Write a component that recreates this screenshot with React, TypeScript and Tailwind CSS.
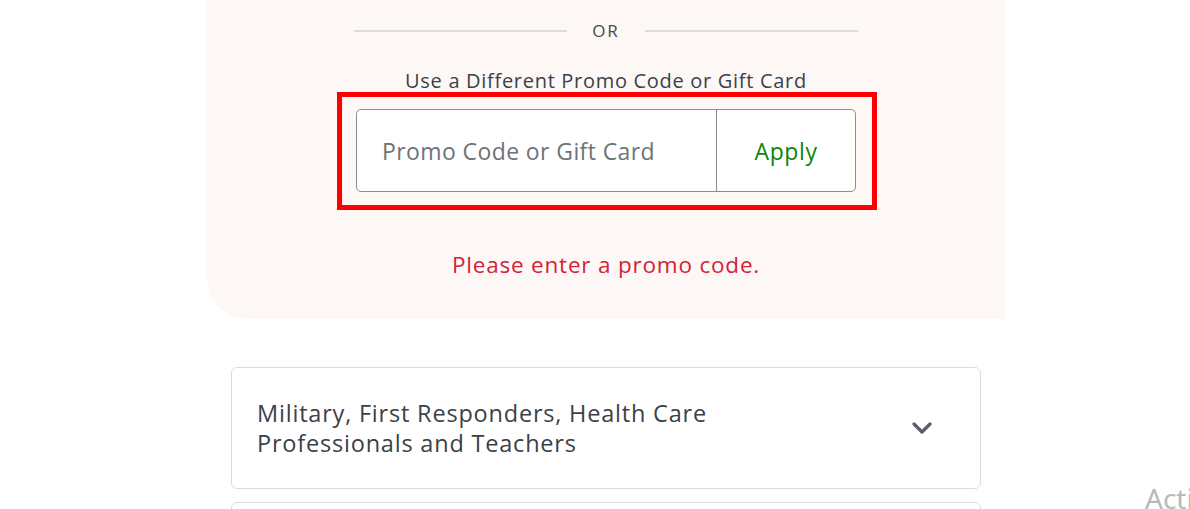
import { ChevronDown } from "lucide-react";

function PromoBox() {
    return (
        <div className="border-[5px] border-[#ff0000] pt-[12px] pl-[14px] pr-[16px] pb-[13px]">
            <div className="flex w-[500px] h-[83px] border border-[#8c8c8c] rounded-[5px] bg-white">
                <input
                    className="flex-1 min-w-0 px-[25px] pt-[2px] text-[23px] text-[#3b4148] placeholder:text-[#6e7379] outline-none bg-transparent tracking-[0.4px]"
                    placeholder="Promo Code or Gift Card"
                />
                <button className="w-[139px] pt-[2px] border-l border-[#8c8c8c] text-[23px] text-[#0a870a] tracking-[0.6px]">
                    Apply
                </button>
            </div>
        </div>
    );
}

export default function App() {
    return (
        <div className="w-[1190px] h-[509px] bg-white overflow-hidden relative font-['Open_Sans',sans-serif]">
            <div className="ml-[207px] w-[798px] h-[319px] bg-[#fdf8f5] rounded-bl-[40px] flex flex-col items-center">
                <div className="flex items-center gap-[25px] mt-[21px] h-[20px]">
                    <div className="w-[213px] h-[2px] bg-[#dedbd8]" />
                    <span className="text-[17px] tracking-[2px] text-[#45494e]">OR</span>
                    <div className="w-[213px] h-[2px] bg-[#dedbd8]" />
                </div>
                <p className="mt-[28px] text-[20px] leading-[24px] text-[#3b4148] tracking-[0.7px]">
                    Use a Different Promo Code or Gift Card
                </p>
                <div className="mt-[-1px] ml-[2px]">
                    <PromoBox />
                </div>
                <p className="mt-[42px] text-[22.5px] leading-[26px] text-[#d3213a] tracking-[0.8px]">
                    Please enter a promo code.
                </p>
            </div>

            <div className="ml-[231px] w-[750px] mt-[48px] flex flex-col gap-[13px]">
                <div className="h-[122px] border border-[#dcdcdc] rounded-[6px] flex items-center justify-between pl-[25px] pr-[42px]">
                    <p className="text-[23.5px] leading-[30px] text-[#3b4148] tracking-[0.8px]">
                        Military, First Responders, Health Care
                        <br />
                        Professionals and Teachers
                    </p>
                    <ChevronDown className="w-[32px] h-[32px] text-[#5a6068]" strokeWidth={2.5} />
                </div>
                <div className="h-[60px] border border-[#dcdcdc] rounded-[6px]" />
            </div>

            <span className="absolute left-[1145px] top-[480px] text-[28px] leading-[36px] text-[#b9b9b9] font-['Noto_Sans',sans-serif]">
                Acti
            </span>
        </div>
    );
}
